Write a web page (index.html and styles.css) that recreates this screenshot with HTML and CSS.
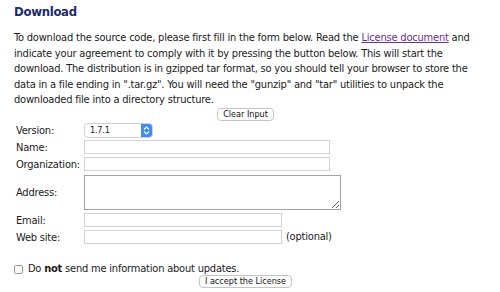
FILE: index.html
```html
<!DOCTYPE html>
<html lang="en">
<head>
    <meta charset="UTF-8">
    <title>Download</title>
    <link rel="stylesheet" href="styles.css">
</head>
<body>
    <div class="page">
        <h2 class="title">Download</h2>

        <p class="intro">To download the source code, please first fill in the form below. Read the <a href="#">License document</a> and indicate your agreement to comply with it by pressing the button below. This will start the download. The distribution is in gzipped tar format, so you should tell your browser to store the data in a file ending in ".tar.gz". You will need the "gunzip" and "tar" utilities to unpack the downloaded file into a directory structure.</p>

        <form class="dl-form">
            <div class="center">
                <button type="reset" class="btn">Clear Input</button>
            </div>

            <table class="fields">
                <tr>
                    <td class="lbl">Version:</td>
                    <td>
                        <div class="select">
                            <span class="select-val">1.7.1</span>
                            <span class="select-arrow">
                                <svg width="7" height="9" viewBox="0 0 7 9">
                                    <path d="M1 3.5 L3.5 1 L6 3.5 M1 5.5 L3.5 8 L6 5.5" fill="none" stroke="#fff" stroke-width="1.1"/>
                                </svg>
                            </span>
                        </div>
                    </td>
                </tr>
                <tr>
                    <td class="lbl">Name:</td>
                    <td><input type="text" class="txt wide"></td>
                </tr>
                <tr>
                    <td class="lbl">Organization:</td>
                    <td><input type="text" class="txt wide"></td>
                </tr>
                <tr>
                    <td class="lbl">Address:</td>
                    <td><textarea class="area"></textarea></td>
                </tr>
                <tr>
                    <td class="lbl">Email:</td>
                    <td><input type="text" class="txt mid"></td>
                </tr>
                <tr>
                    <td class="lbl">Web site:</td>
                    <td><input type="text" class="txt mid"> <span class="opt">(optional)</span></td>
                </tr>
            </table>

            <label class="check">
                <input type="checkbox">
                Do <b>not</b> send me information about updates.
            </label>

            <div class="center">
                <button type="button" class="btn">I accept the License</button>
            </div>
        </form>
    </div>
</body>
</html>
```

FILE: styles.css
```css
html, body {
    margin: 0;
    padding: 0;
    background: #fff;
}
body {
    font-family: "DejaVu Sans Condensed", "DejaVu Sans", Verdana, sans-serif;
    font-stretch: condensed;
    font-size: 11px;
    letter-spacing: -0.2px;
    color: #1a1a1a;
}
.page {
    width: 463px;
    padding: 4px 14px 0;
}
.title {
    margin: 0;
    font-size: 13px;
    line-height: 16px;
    letter-spacing: -0.3px;
    color: #1d2b6e;
}
.intro {
    margin: 10px 0 0;
    line-height: 15.5px;
}
.intro a {
    color: #6a2d9c;
}
.center {
    text-align: center;
    line-height: 13px;
    height: 14px;
}
.dl-form {
    margin: 0;
}
.btn {
    font-family: inherit;
    font-stretch: condensed;
    font-size: 9px;
    line-height: 11px;
    height: 13px;
    padding: 0 5px;
    background: #fff;
    color: #111;
    border: 1px solid #c4c4c4;
    border-radius: 4px;
    vertical-align: top;
}
.fields {
    border-collapse: collapse;
    margin: 0 0 0 2px;
}
.fields td {
    padding: 0;
    height: 17px;
    vertical-align: middle;
}
.lbl {
    width: 68px;
}
.select {
    display: inline-flex;
    align-items: stretch;
    width: 69px;
    height: 15px;
    box-sizing: border-box;
    border: 1px solid #cfcfcf;
    border-radius: 4px;
    overflow: hidden;
    vertical-align: middle;
}
.select-val {
    flex: 1;
    font-size: 9px;
    line-height: 13px;
    padding-left: 5px;
}
.select-arrow {
    width: 11px;
    background: #3d8ef5;
    display: flex;
    align-items: center;
    justify-content: center;
}
.txt {
    box-sizing: border-box;
    height: 14px;
    margin: 0;
    padding: 0;
    border: 1px solid #d2d2d2;
    vertical-align: middle;
}
.wide {
    width: 246px;
}
.mid {
    width: 198px;
}
.area {
    display: block;
    box-sizing: border-box;
    width: 257px;
    height: 35px;
    margin: 2px 0;
    border: 1px solid #a3a3a3;
    resize: vertical;
}
.opt {
    margin-left: 1px;
}
.check {
    display: block;
    margin: 16px 0 0;
    line-height: 13px;
}
.check input {
    appearance: none;
    width: 9px;
    height: 9px;
    margin: 0 2px 0 0;
    border: 1px solid #9a9a9a;
    border-radius: 2px;
    vertical-align: -2px;
}
```
